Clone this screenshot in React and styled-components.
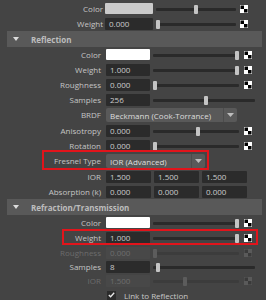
import React from "react";
import styled, { createGlobalStyle } from "styled-components";

const Global = createGlobalStyle`
  html, body { margin: 0; padding: 0; background: #444444; }
  body { width: 266px; height: 300px; overflow: hidden; font-family: "Open Sans", "DejaVu Sans", sans-serif; font-size: 8px; }
`;

const Panel = styled.div`
  width: 255px;
  margin-left: 7px;
  padding-top: 1px;
  display: flex;
  flex-direction: column;
`;

const Row = styled.div`
  position: relative;
  display: flex;
  align-items: center;
  height: ${(p) => p.$h || 15}px;
`;

const Label = styled.div`
  width: ${(p) => p.$w}px;
  flex: none;
  text-align: right;
  color: ${(p) => (p.$disabled ? "#6c6c6c" : "#c4c4c4")};
  white-space: nowrap;
  line-height: 12px;
`;

const Controls = styled.div`
  display: flex;
  align-items: center;
  margin-left: ${(p) => p.$gap}px;
  gap: 3px;
`;

const Field = styled.div`
  width: ${(p) => p.$w}px;
  height: 12px;
  flex: none;
  box-sizing: border-box;
  padding-left: 4px;
  line-height: 12px;
  background: ${(p) => (p.$disabled ? "#484848" : "#2b2b2b")};
  color: ${(p) => (p.$disabled ? "#6e6e6e" : "#cccccc")};
  border-radius: 1px;
`;

const Swatch = styled.div`
  width: ${(p) => p.$w}px;
  height: 11px;
  flex: none;
  background: ${(p) => p.$color};
  border-radius: 1px;
`;

const SliderBox = styled.div`
  position: relative;
  width: ${(p) => p.$w}px;
  height: 12px;
  flex: none;
`;

const Track = styled.div`
  position: absolute;
  left: 0;
  right: 0;
  top: 5px;
  height: 3px;
  border-radius: 1px;
  background: ${(p) => (p.$disabled ? "#3c3c3c" : "#2a2a2a")};
`;

const Handle = styled.div`
  position: absolute;
  top: 2px;
  width: 4px;
  height: 9px;
  border-radius: 1px;
  background: ${(p) => (p.$disabled ? "#5c5c5c" : "#c4c4c4")};
`;

const CheckerBox = styled.div`
  margin-left: ${(p) => p.$gap}px;
  width: 8px;
  height: 8px;
  flex: none;
  display: flex;
`;

const Dropdown = styled.div`
  width: ${(p) => p.$w}px;
  height: 14px;
  box-sizing: border-box;
  display: flex;
  align-items: center;
  background: #595959;
  border-radius: 2px;
  color: #dddddd;
  padding-left: 4px;
`;

const DropText = styled.div`
  flex: 1;
  white-space: nowrap;
`;

const DropArrow = styled.div`
  width: 13px;
  height: 14px;
  display: flex;
  align-items: center;
  justify-content: center;
  border-left: 1px solid #4c4c4c;
`;

const Header = styled.div`
  height: 16px;
  background: #595959;
  display: flex;
  align-items: center;
  padding-left: 6px;
  color: #bdbdbd;
  font-weight: 700;
  gap: 12px;
`;

const Outline = styled.div`
  position: absolute;
  left: ${(p) => p.$l}px;
  width: ${(p) => p.$w}px;
  top: ${(p) => p.$t}px;
  height: ${(p) => p.$hh}px;
  border: 2px solid #e2141b;
  box-sizing: border-box;
  pointer-events: none;
`;

const CheckRow = styled.div`
  display: flex;
  align-items: center;
  height: 14px;
  padding-left: 100px;
  gap: 8px;
  color: #c8c8c8;
`;

const CheckSquare = styled.div`
  width: 9px;
  height: 9px;
  background: #2b2b2b;
  display: flex;
  align-items: center;
  justify-content: center;
`;

function Checker({ gap, disabled }) {
  const a = disabled ? "#5a5a5a" : "#ffffff";
  const b = disabled ? "#3a3a3a" : "#000000";
  return (
    <CheckerBox $gap={gap}>
      <svg width="8" height="8" viewBox="0 0 8 8">
        <rect width="8" height="8" fill={a} />
        <rect x="0.5" y="0.5" width="3.5" height="3.5" fill={b} />
        <rect x="4" y="4" width="3.5" height="3.5" fill={b} />
      </svg>
    </CheckerBox>
  );
}

function Slider({ w, value, disabled }) {
  return (
    <SliderBox $w={w}>
      <Track $disabled={disabled} />
      <Handle $disabled={disabled} style={{ left: Math.round(value * (w - 4)) }} />
    </SliderBox>
  );
}

function Arrow() {
  return (
    <svg width="7" height="4" viewBox="0 0 7 4">
      <path d="M0 0 L7 0 L3.5 4 Z" fill="#bdbdbd" />
    </svg>
  );
}

const TOP = { lw: 96, gap: 2, fw: 48, sw: 80, cg: 4 };
const SEC = { lw: 94, gap: 5, fw: 44, sw: 86, cg: 5 };

function SliderRow({ g, label, value, color, pos, checker = true, disabled, full, h, children }) {
  return (
    <Row $h={h}>
      <Label $w={g.lw} $disabled={disabled}>{label}</Label>
      <Controls $gap={g.gap}>
        {color ? <Swatch $w={g.fw} $color={color} /> : <Field $w={g.fw} $disabled={disabled}>{value}</Field>}
        <Slider w={full ? 102 : g.sw} value={pos} disabled={disabled} />
      </Controls>
      {checker && <Checker gap={g.cg} disabled={disabled} />}
      {children}
    </Row>
  );
}

function TripleRow({ label, values }) {
  return (
    <Row>
      <Label $w={SEC.lw}>{label}</Label>
      <Controls $gap={SEC.gap}>
        {values.map((v, i) => (
          <Field key={i} $w={45}>{v}</Field>
        ))}
      </Controls>
    </Row>
  );
}

function SectionHeader({ title }) {
  return (
    <Header>
      <svg width="6" height="4" viewBox="0 0 6 4">
        <path d="M0 0 L6 0 L3 4 Z" fill="#dcdcdc" />
      </svg>
      <span>{title}</span>
    </Header>
  );
}

export default function App() {
  return (
    <>
      <Global />
      <Panel>
        <SliderRow g={TOP} label="Color" color="#cacaca" pos={0.5} />
        <SliderRow g={TOP} label="Weight" value="0.000" pos={0} />
        <SectionHeader title="Reflection" />
        <SliderRow g={SEC} label="Color" color="#ffffff" pos={1} />
        <SliderRow g={SEC} label="Weight" value="1.000" pos={1} />
        <SliderRow g={SEC} label="Roughness" value="0.000" pos={0} />
        <SliderRow g={SEC} label="Samples" value="256" pos={0.52} checker={false} full />
        <Row $h={16}>
          <Label $w={SEC.lw}>BRDF</Label>
          <Controls $gap={SEC.gap}>
            <Dropdown $w={131}>
              <DropText>Beckmann (Cook-Torrance)</DropText>
              <DropArrow><Arrow /></DropArrow>
            </Dropdown>
          </Controls>
        </Row>
        <SliderRow g={SEC} label="Anisotropy" value="0.000" pos={0.53} />
        <SliderRow g={SEC} label="Rotation" value="0.000" pos={0} />
        <Row $h={16}>
          <Label $w={SEC.lw}>Fresnel Type</Label>
          <Controls $gap={SEC.gap}>
            <Dropdown $w={99}>
              <DropText>IOR (Advanced)</DropText>
              <DropArrow><Arrow /></DropArrow>
            </Dropdown>
          </Controls>
          <Outline $l={35} $w={167} $t={-3} $hh={20} />
        </Row>
        <TripleRow label="IOR" values={["1.500", "1.500", "1.500"]} />
        <TripleRow label="Absorption (k)" values={["0.000", "0.000", "0.000"]} />
        <SectionHeader title="Refraction/Transmission" />
        <SliderRow g={SEC} label="Color" color="#ffffff" pos={1} />
        <SliderRow g={SEC} label="Weight" value="1.000" pos={1}>
          <Outline $l={55} $w={196} $t={-1} $hh={16} />
        </SliderRow>
        <SliderRow g={SEC} label="Roughness" value="0.000" pos={0} disabled />
        <SliderRow g={SEC} label="Samples" value="8" pos={0.03} checker={false} full h={14} />
        <SliderRow g={SEC} label="IOR" value="1.500" pos={0.36} disabled h={14} />
        <CheckRow>
          <CheckSquare>
            <svg width="7" height="6" viewBox="0 0 7 6">
              <path d="M0.8 3 L2.6 4.8 L6.2 0.8" stroke="#e8e8e8" strokeWidth="1.3" fill="none" />
            </svg>
          </CheckSquare>
          <span>Link to Reflection</span>
        </CheckRow>
      </Panel>
    </>
  );
}
